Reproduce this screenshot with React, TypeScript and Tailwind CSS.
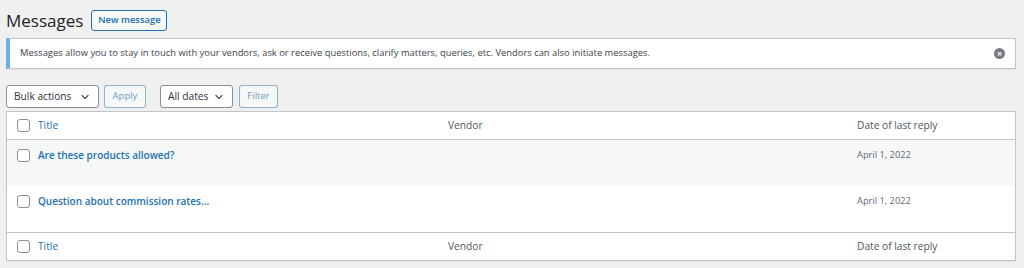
import { ChevronDown } from "lucide-react";

const rows = [
  { title: "Are these products allowed?", date: "April 1, 2022" },
  { title: "Question about commission rates...", date: "April 1, 2022" },
];

function Checkbox() {
  return <span className="block h-[13px] w-[13px] rounded-[3px] border border-[#8c8f94] bg-white" />;
}

function HeadRow({ top }: { top?: boolean }) {
  return (
    <div
      className={`flex h-[28px] items-center text-[10.2px] text-[#50575e] ${
        top ? "border-b border-[#c3c4c7]" : "border-t border-[#c3c4c7]"
      }`}
    >
      <div className="flex w-[31px] justify-center pl-[1px]">
        <Checkbox />
      </div>
      <div className="w-[410px] text-[#2271b1]">Title</div>
      <div className="w-[409px]">Vendor</div>
      <div className="flex-1">Date of last reply</div>
    </div>
  );
}

function SelectBox({ label, className }: { label: string; className: string }) {
  return (
    <div
      className={`flex h-[23px] items-center justify-between whitespace-nowrap rounded-[3px] border border-[#8c8f94] bg-white pl-[7px] pr-[7px] text-[10.2px] text-[#2c3338] ${className}`}
    >
      <span>{label}</span>
      <ChevronDown className="h-[12px] w-[12px] text-[#50575e]" strokeWidth={2.5} />
    </div>
  );
}

function SmallButton({ label, className }: { label: string; className: string }) {
  return (
    <button
      className={`block h-[23px] whitespace-nowrap rounded-[3px] border border-[#2271b1]/50 bg-[#f6f7f7] text-[9.5px] text-[#2271b1]/70 ${className}`}
    >
      {label}
    </button>
  );
}

export default function App() {
  return (
    <div
      className="h-[268px] w-[1024px] bg-[#f0f0f1] pl-[6px] pr-[8px] pt-[8px]"
      style={{ fontFamily: '"Open Sans", "Noto Sans", sans-serif' }}
    >
      <div className="flex h-[24px] items-center gap-[7px]">
        <h1 className="text-[17px] font-normal leading-none text-[#1d2327]">Messages</h1>
        <button className="ml-[1px] h-[21px] w-[76px] whitespace-nowrap rounded-[3px] border border-[#2271b1] bg-[#f6f7f7] text-[9.4px] font-semibold text-[#2271b1]">
          New message
        </button>
      </div>

      <div className="mt-[6px] flex h-[31px] items-center justify-between border border-l-4 border-[#c3c4c7] border-l-[#72aee6] bg-white pl-[10px] pr-[10px] shadow-[0_1px_1px_rgba(0,0,0,0.04)]">
        <p className="text-[9.4px] text-[#3c434a]">
          Messages allow you to stay in touch with your vendors, ask or receive questions, clarify matters, queries, etc. Vendors can also initiate messages.
        </p>
        <span className="flex h-[11px] w-[11px] items-center justify-center rounded-full bg-[#787c82] text-[9px] font-bold leading-none text-white">
          ×
        </span>
      </div>

      <div className="mt-[16px] flex h-[23px] items-center">
        <SelectBox label="Bulk actions" className="w-[93px]" />
        <SmallButton label="Apply" className="ml-[5px] w-[42px]" />
        <SelectBox label="All dates" className="ml-[14px] w-[73px]" />
        <SmallButton label="Filter" className="ml-[6px] w-[39px]" />
      </div>

      <div className="mt-[3px] border border-[#c3c4c7] bg-white shadow-[0_1px_1px_rgba(0,0,0,0.04)]">
        <HeadRow top />
        {rows.map((r, i) => (
          <div
            key={r.title}
            className={`flex h-[46px] items-start pt-[8px] ${i === 0 ? "bg-[#f6f7f7]" : "bg-white"}`}
          >
            <div className="flex w-[31px] justify-center pl-[1px] pt-[1px]">
              <Checkbox />
            </div>
            <div className="w-[410px] text-[10px] font-semibold text-[#2271b1]">{r.title}</div>
            <div className="w-[409px]" />
            <div className="flex-1 text-[9.3px] text-[#646970]">{r.date}</div>
          </div>
        ))}
        <HeadRow />
      </div>
    </div>
  );
}
